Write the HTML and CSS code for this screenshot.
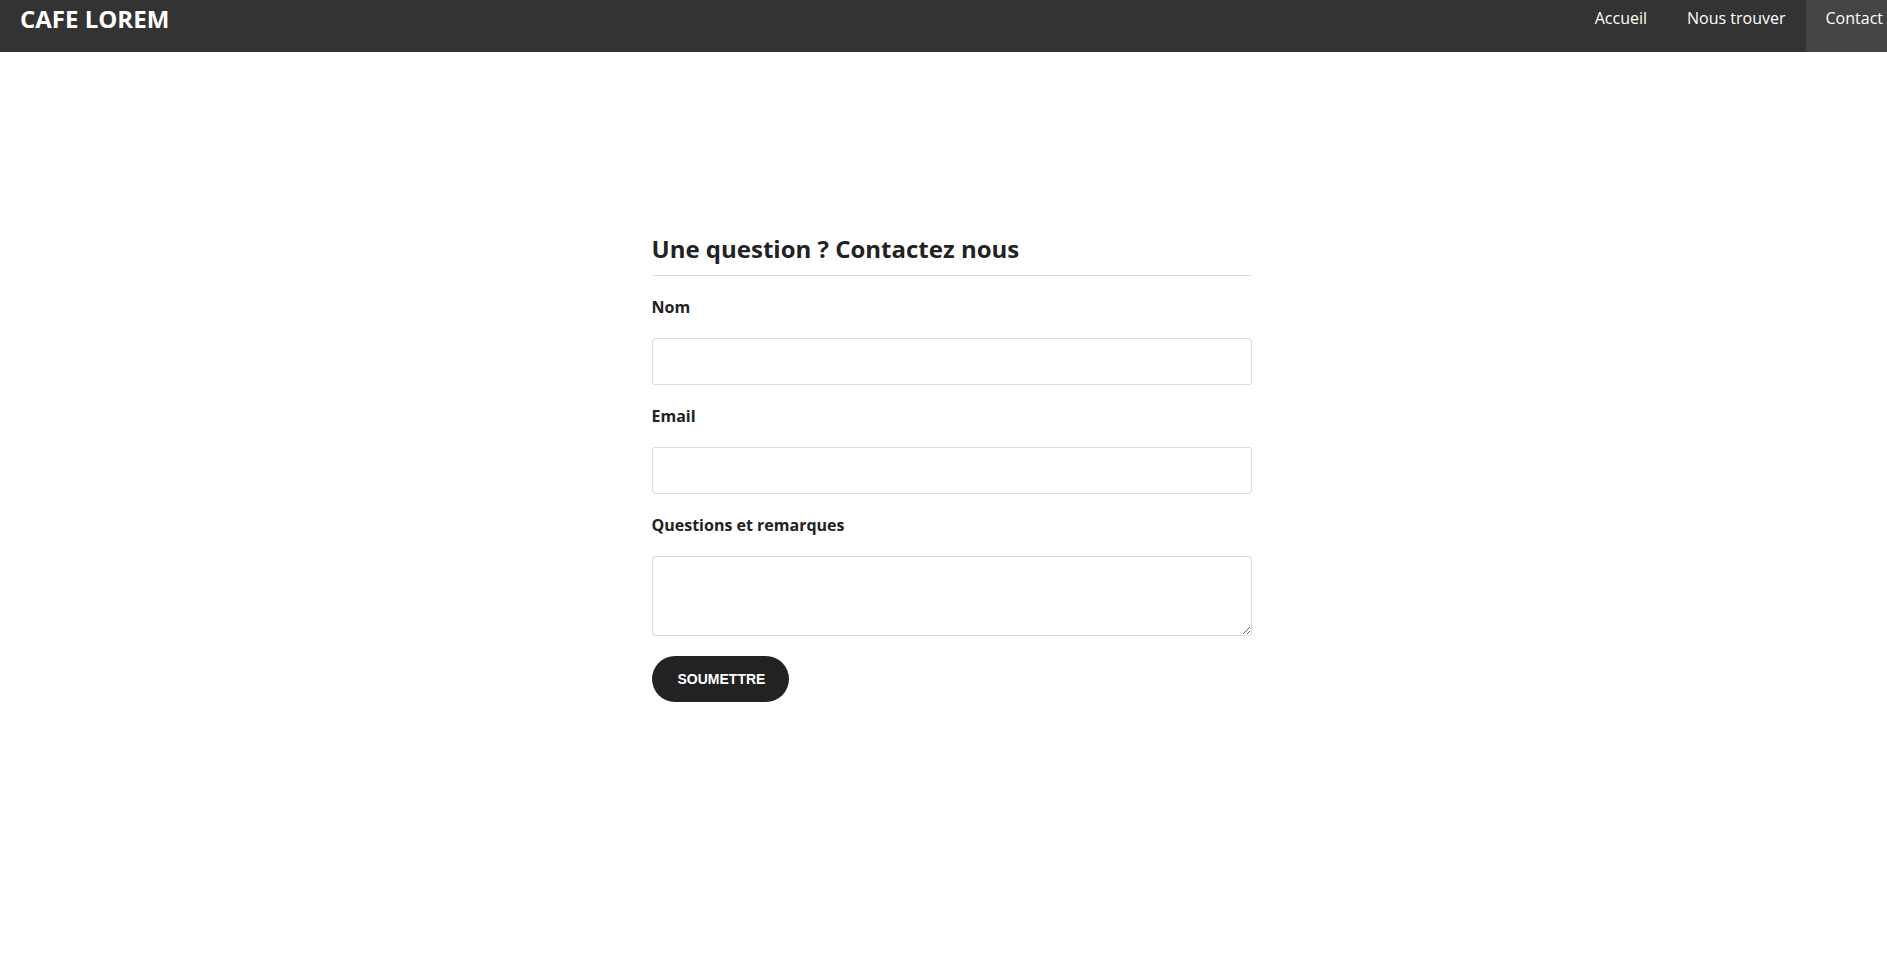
FILE: index.html
```html
<!DOCTYPE html>
<html lang="fr">
<head>
    <meta charset="UTF-8">
    <meta name="viewport" content="width=device-width, initial-scale=1.0">
    <title>Cafe Lorem - Contact</title>
    <link rel="stylesheet" href="styles.css">
</head>
<body>
    <header class="topbar">
        <div class="logo">CAFE LOREM</div>
        <nav class="menu">
            <a href="#">Accueil</a>
            <a href="#">Nous trouver</a>
            <a href="#" class="active">Contact</a>
        </nav>
    </header>
    <main class="contact">
        <h2>Une question ? Contactez nous</h2>
        <form>
            <label for="nom">Nom</label>
            <input type="text" id="nom">
            <label for="email">Email</label>
            <input type="email" id="email">
            <label for="message">Questions et remarques</label>
            <textarea id="message"></textarea>
            <button type="submit">SOUMETTRE</button>
        </form>
    </main>
</body>
</html>
```

FILE: styles.css
```css
html {
    overflow-x: hidden;
}
body {
    font-family: 'Open Sans', 'Liberation Sans', sans-serif;
    background-color: #fff;
    color: #222;
    margin: 0;
    padding: 0;
    width: 1903px;
}
.topbar {
    display: flex;
    justify-content: space-between;
    align-items: flex-start;
    height: 52px;
    background-color: #333;
}
.logo {
    color: #fff;
    font-size: 24px;
    font-weight: bold;
    line-height: 32px;
    padding: 3px 20px 0;
}
.menu {
    display: flex;
}
.menu a {
    display: block;
    color: #fff;
    text-decoration: none;
    font-size: 16px;
    line-height: 24px;
    padding: 6px 20px 22px;
}
.menu a.active {
    background-color: #444;
}
.contact {
    width: 600px;
    margin: 181px auto 0;
}
h2 {
    font-size: 24px;
    font-weight: bold;
    line-height: 32px;
    margin: 0 0 19px;
    padding-bottom: 10px;
    border-bottom: 1px solid #ddd;
}
label {
    display: block;
    font-size: 16px;
    font-weight: bold;
    line-height: 24px;
    margin-bottom: 19px;
}
input, textarea {
    display: block;
    box-sizing: border-box;
    width: 100%;
    border: 1px solid #ddd;
    border-radius: 3px;
    font-family: inherit;
    font-size: 16px;
    padding: 10px;
}
input {
    height: 47px;
    margin-bottom: 19px;
}
textarea {
    height: 80px;
    margin-bottom: 20px;
}
button {
    background-color: #222;
    color: #fff;
    font-family: 'Liberation Sans', Arial, sans-serif;
    font-size: 14px;
    font-weight: bold;
    height: 46px;
    padding: 0 24px 0 26px;
    border: none;
    border-radius: 23px;
    cursor: pointer;
}
```
